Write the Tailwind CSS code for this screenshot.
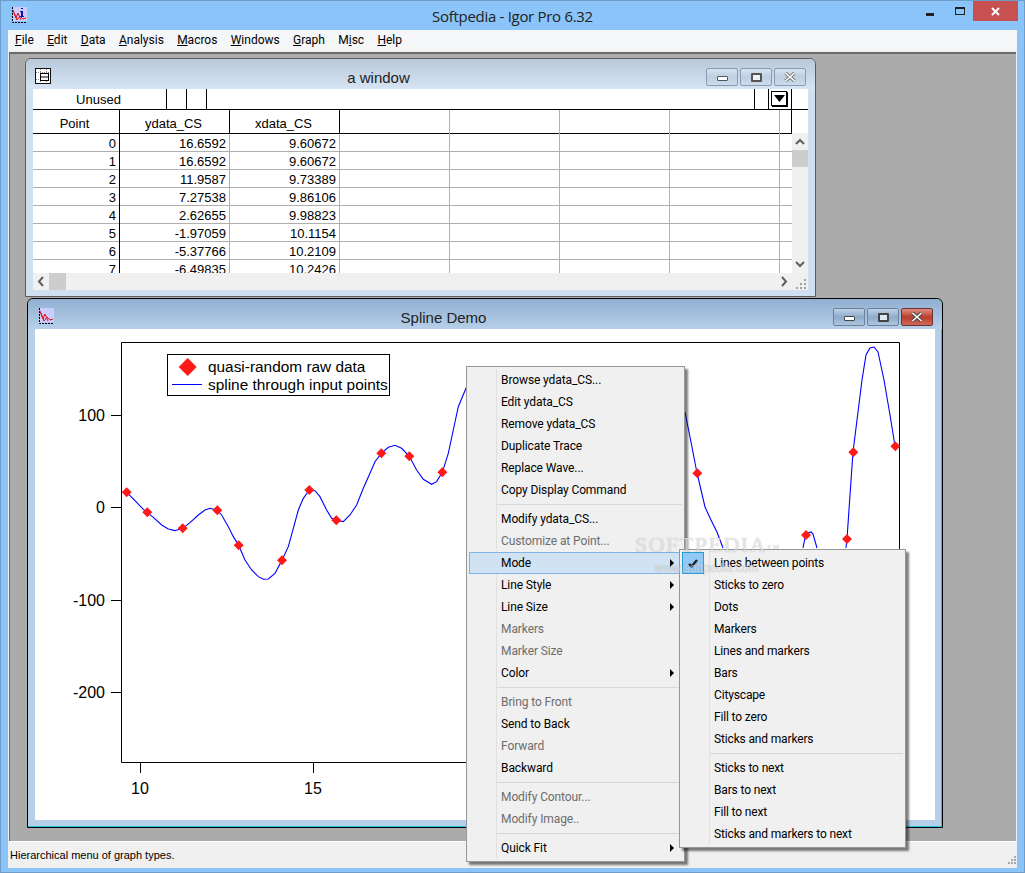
<!DOCTYPE html>
<html lang="en">
<head>
	<meta charset="UTF-8">
	<title>Softpedia - Igor Pro 6.32</title>
	<script src="https://cdn.jsdelivr.net/npm/@tailwindcss/browser@4"></script>
</head>
<body class="bg-[#8ac4f8] overflow-hidden">
<div class="relative w-[1025px] h-[873px] overflow-hidden border border-[#6d9cc9] font-['Roboto',sans-serif] text-[12px] text-black flex flex-col">
	<!-- App title bar -->
	<div class="h-[29px] flex items-start shrink-0">
		<svg class="mt-[6px] ml-[10px] w-[16px] h-[16px]" viewBox="0 0 16 16">
			<rect x="2" y="0" width="14" height="14" fill="#ccccff"/>
			<path d="M1.500 0V15.500H16" fill="none" stroke="#000" stroke-dasharray="2 1"/>
			<path d="M2 3L5 11L7 6L10 13M3 6L6 13L9 9L12 12L15 11" fill="none" stroke="#e01010"/>
			<path d="M10 1h2v1h-2zM9 4h3v5h1v1h-4v-1h1v-4h-1z" fill="#1010b0"/>
		</svg>
		<div class="flex-1 text-center text-[15px] leading-[30px] pl-[76px] font-['Open_Sans',sans-serif] tracking-[-0.3px] text-[#222]">Softpedia - Igor Pro 6.32</div>
		<div class="w-[16px] h-[3px] bg-[#222] mt-[12px] mr-[-4px] scale-x-[.5]"></div>
		<div class="w-[10px] h-[8px] border border-[#222] border-t-2 mt-[6px] ml-[21px]"></div>
		<div class="w-[45px] h-[20px] bg-[#c75050] ml-[8px] mr-[6px] flex items-center justify-center">
			<svg class="w-[9px] h-[9px]" viewBox="0 0 9 9"><path d="M1 1L8 8M8 1L1 8" stroke="#fff" stroke-width="2"/></svg>
		</div>
	</div>

	<!-- Client area -->
	<div class="ml-[7px] mr-[7px] flex-1 flex flex-col bg-[#f0f0f0]">
		<!-- Menu bar -->
		<div class="h-[20px] bg-[#f5f6f7] flex items-center pl-[7px] gap-[13.300px] shrink-0">
			<span><u>F</u>ile</span><span><u>E</u>dit</span><span><u>D</u>ata</span><span><u>A</u>nalysis</span><span><u>M</u>acros</span><span><u>W</u>indows</span><span><u>G</u>raph</span><span>M<u>i</u>sc</span><span><u>H</u>elp</span>
		</div>

		<!-- MDI area -->
		<div class="relative h-[789px] mt-[2px] mx-px bg-[#ababab] border-t-2 border-l border-[#6a6a6a] shrink-0">

			<!-- Table window -->
			<div class="absolute left-[15px] top-[4px] w-[791px] h-[239px] border border-[#5c5c5c] rounded-t-[6px] bg-[#cfe0f1] flex flex-col font-['Liberation_Sans',sans-serif]">
				<div class="h-[30px] rounded-t-[6px] bg-gradient-to-b from-[#b9c9da] to-[#d6e4f3] flex items-start shrink-0">
					<svg class="mt-[9px] ml-[9px] w-[16px] h-[16px]" viewBox="0 0 16 16">
						<rect x=".5" y=".5" width="15" height="15" fill="#fff" stroke="#111"/>
						<path d="M1 4.500H15M1 11.500H15M5.500 1V15M11.500 1V15" stroke="#888" stroke-dasharray="1 1" fill="none"/>
						<rect x="5.500" y="5.500" width="8" height="7" fill="#fff" stroke="#000"/>
						<path d="M5.500 9H13.500" stroke="#000"/>
					</svg>
					<div class="flex-1 text-center text-[15px] leading-[38px] text-[#222]">a window</div>
					<div class="flex gap-[2px] mt-[9px] mr-[9px]">
						<div class="w-[32px] h-[18px] border border-[#8b99b2] rounded-[2px] bg-gradient-to-b from-[#d5e2ef] via-[#bfcfe2] to-[#cddcec] flex items-center justify-center"><div class="w-[11px] h-[5px] mt-[3px] border border-[#555] bg-white rounded-[1px]"></div></div>
						<div class="w-[32px] h-[18px] border border-[#8b99b2] rounded-[2px] bg-gradient-to-b from-[#d5e2ef] via-[#bfcfe2] to-[#cddcec] flex items-center justify-center"><div class="w-[11px] h-[9px] border-2 border-[#555] bg-white/70 rounded-[1px]"></div></div>
						<div class="w-[32px] h-[18px] border border-[#8b99b2] rounded-[2px] bg-gradient-to-b from-[#d5e2ef] via-[#bfcfe2] to-[#cddcec] flex items-center justify-center"><svg class="w-[12px] h-[10px]" viewBox="0 0 12 10"><path d="M1.500 1L10.500 9M10.500 1L1.500 9" stroke="#777" stroke-width="3.400"/><path d="M1.500 1L10.500 9M10.500 1L1.500 9" stroke="#fff" stroke-width="1.600"/></svg></div>
					</div>
				</div>
				<div class="relative mx-[7px] h-[201px] bg-white overflow-hidden">
					<!-- Entry row -->
					<div class="h-[21px] border-b border-black relative">
						<div class="absolute left-0 top-0 w-[134px] h-[20px] border-r border-black text-center text-[13px] leading-[22px] pr-[2px]">Unused</div>
						<div class="absolute left-[153px] top-0 w-px h-[20px] bg-black"></div>
						<div class="absolute left-[173px] top-0 w-px h-[20px] bg-black"></div>
						<div class="absolute left-[721px] top-0 w-px h-[20px] bg-black"></div>
						<div class="absolute left-[735px] top-0 w-px h-[20px] bg-black"></div>
						<div class="absolute left-[758px] top-0 w-px h-[44px] bg-black z-10"></div>
						<div class="absolute left-[738px] top-[2px] w-[16px] h-[15px] border border-black bg-white shadow-[1px_1px_0_#000] flex items-center justify-center">
							<svg class="w-[11px] h-[7px]" viewBox="0 0 11 7"><path d="M0 0H11L5.500 7Z" fill="#000"/></svg>
						</div>
					</div>
					<!-- Column titles -->
					<div class="h-[24px] w-[759px] border-b border-black grid grid-cols-[87px_110px_110px_110px_110px_110px_110px] text-[13px] leading-[28px] text-center">
						<div class="border-r border-black pr-[3px]">Point</div>
						<div class="border-r border-black pr-[2px]">ydata_CS</div>
						<div class="border-r border-black pr-[2px]">xdata_CS</div>
						<div class="border-r border-[#b0b0b0]"></div>
						<div class="border-r border-[#b0b0b0]"></div>
						<div class="border-r border-[#b0b0b0]"></div>
						<div class="border-r border-[#b0b0b0]"></div>
					</div>
					<!-- Rows -->
					<div class="h-[139px] overflow-hidden w-[759px] text-[13px] leading-[19px] text-right">
						<div class="h-[18px] grid grid-cols-[87px_110px_110px_110px_110px_110px_110px] border-b border-[#b0b0b0]"><div class="border-r border-black pr-[3px]">0</div><div class="border-r border-[#b0b0b0] pr-[3px]">16.6592</div><div class="border-r border-[#b0b0b0] pr-[3px]">9.60672</div><div class="border-r border-[#b0b0b0]"></div><div class="border-r border-[#b0b0b0]"></div><div class="border-r border-[#b0b0b0]"></div><div class="border-r border-[#b0b0b0]"></div></div>
						<div class="h-[18px] grid grid-cols-[87px_110px_110px_110px_110px_110px_110px] border-b border-[#b0b0b0]"><div class="border-r border-black pr-[3px]">1</div><div class="border-r border-[#b0b0b0] pr-[3px]">16.6592</div><div class="border-r border-[#b0b0b0] pr-[3px]">9.60672</div><div class="border-r border-[#b0b0b0]"></div><div class="border-r border-[#b0b0b0]"></div><div class="border-r border-[#b0b0b0]"></div><div class="border-r border-[#b0b0b0]"></div></div>
						<div class="h-[18px] grid grid-cols-[87px_110px_110px_110px_110px_110px_110px] border-b border-[#b0b0b0]"><div class="border-r border-black pr-[3px]">2</div><div class="border-r border-[#b0b0b0] pr-[3px]">11.9587</div><div class="border-r border-[#b0b0b0] pr-[3px]">9.73389</div><div class="border-r border-[#b0b0b0]"></div><div class="border-r border-[#b0b0b0]"></div><div class="border-r border-[#b0b0b0]"></div><div class="border-r border-[#b0b0b0]"></div></div>
						<div class="h-[18px] grid grid-cols-[87px_110px_110px_110px_110px_110px_110px] border-b border-[#b0b0b0]"><div class="border-r border-black pr-[3px]">3</div><div class="border-r border-[#b0b0b0] pr-[3px]">7.27538</div><div class="border-r border-[#b0b0b0] pr-[3px]">9.86106</div><div class="border-r border-[#b0b0b0]"></div><div class="border-r border-[#b0b0b0]"></div><div class="border-r border-[#b0b0b0]"></div><div class="border-r border-[#b0b0b0]"></div></div>
						<div class="h-[18px] grid grid-cols-[87px_110px_110px_110px_110px_110px_110px] border-b border-[#b0b0b0]"><div class="border-r border-black pr-[3px]">4</div><div class="border-r border-[#b0b0b0] pr-[3px]">2.62655</div><div class="border-r border-[#b0b0b0] pr-[3px]">9.98823</div><div class="border-r border-[#b0b0b0]"></div><div class="border-r border-[#b0b0b0]"></div><div class="border-r border-[#b0b0b0]"></div><div class="border-r border-[#b0b0b0]"></div></div>
						<div class="h-[18px] grid grid-cols-[87px_110px_110px_110px_110px_110px_110px] border-b border-[#b0b0b0]"><div class="border-r border-black pr-[3px]">5</div><div class="border-r border-[#b0b0b0] pr-[3px]">-1.97059</div><div class="border-r border-[#b0b0b0] pr-[3px]">10.1154</div><div class="border-r border-[#b0b0b0]"></div><div class="border-r border-[#b0b0b0]"></div><div class="border-r border-[#b0b0b0]"></div><div class="border-r border-[#b0b0b0]"></div></div>
						<div class="h-[18px] grid grid-cols-[87px_110px_110px_110px_110px_110px_110px] border-b border-[#b0b0b0]"><div class="border-r border-black pr-[3px]">6</div><div class="border-r border-[#b0b0b0] pr-[3px]">-5.37766</div><div class="border-r border-[#b0b0b0] pr-[3px]">10.2109</div><div class="border-r border-[#b0b0b0]"></div><div class="border-r border-[#b0b0b0]"></div><div class="border-r border-[#b0b0b0]"></div><div class="border-r border-[#b0b0b0]"></div></div>
						<div class="h-[18px] grid grid-cols-[87px_110px_110px_110px_110px_110px_110px] border-b border-[#b0b0b0]"><div class="border-r border-black pr-[3px]">7</div><div class="border-r border-[#b0b0b0] pr-[3px]">-6.49835</div><div class="border-r border-[#b0b0b0] pr-[3px]">10.2426</div><div class="border-r border-[#b0b0b0]"></div><div class="border-r border-[#b0b0b0]"></div><div class="border-r border-[#b0b0b0]"></div><div class="border-r border-[#b0b0b0]"></div></div>
					</div>
					<!-- Scrollbars -->
					<div class="absolute left-[759px] top-[44px] w-[16px] h-[140px] bg-[#f0f0f0]">
						<svg class="w-[16px] h-[17px]" viewBox="0 0 16 17"><path d="M4 11L8 7L12 11" fill="none" stroke="#606060" stroke-width="2"/></svg>
						<div class="w-[16px] h-[17px] bg-[#cdcdcd]"></div>
						<svg class="absolute bottom-0 w-[16px] h-[17px]" viewBox="0 0 16 17"><path d="M4 6L8 10L12 6" fill="none" stroke="#606060" stroke-width="2"/></svg>
					</div>
					<div class="absolute left-0 top-[184px] w-[775px] h-[17px] bg-[#f0f0f0] flex items-center">
						<svg class="w-[16px] h-[17px]" viewBox="0 0 16 17"><path d="M10 4L6 8.500L10 13" fill="none" stroke="#606060" stroke-width="2"/></svg>
						<div class="w-[17px] h-[17px] bg-[#cdcdcd]"></div>
						<svg class="absolute left-[743px] w-[16px] h-[17px]" viewBox="0 0 16 17"><path d="M6 4L10 8.500L6 13" fill="none" stroke="#606060" stroke-width="2"/></svg>
						<svg class="absolute left-[763px] top-[5px] w-[11px] h-[11px]" viewBox="0 0 11 11"><path d="M8 1h2v2H8zM4 5h2v2H4zM8 5h2v2H8zM0 9h2v2H0zM4 9h2v2H4zM8 9h2v2H8z" fill="#a0a0a0"/></svg>
					</div>
				</div>
			</div>

			<!-- Graph window -->
			<div class="absolute left-[17px] top-[244px] w-[916px] h-[530px] rounded-t-[6px] border border-black bg-[#b7d0e9] flex flex-col font-['Liberation_Sans',sans-serif] shadow-[inset_-1px_-1px_0_#1fc5de]">
				<div class="h-[30px] rounded-t-[6px] bg-gradient-to-b from-[#90afd0] to-[#b7d0e9] flex items-start shrink-0">
					<svg class="mt-[9px] ml-[10px] w-[16px] h-[16px]" viewBox="0 0 16 16">
						<rect x="2" y="0" width="14" height="14" fill="#ccccff"/>
						<path d="M1.500 0V15.500H16" fill="none" stroke="#000" stroke-dasharray="2 1"/>
						<path d="M2 3L5 11L7 6L10 13M3 5L6 13L9 9L12 12L15 11" fill="none" stroke="#e01010"/>
					</svg>
					<div class="flex-1 text-center text-[15px] leading-[38px] text-[#222]">Spline Demo</div>
					<div class="flex gap-[2px] mt-[9px] mr-[9px]">
						<div class="w-[32px] h-[18px] border border-[#6e7f9c] rounded-[2px] bg-gradient-to-b from-[#bfd2e6] via-[#8fabcb] to-[#adc5de] flex items-center justify-center"><div class="w-[11px] h-[5px] mt-[3px] border border-[#444] bg-white rounded-[1px]"></div></div>
						<div class="w-[32px] h-[18px] border border-[#6e7f9c] rounded-[2px] bg-gradient-to-b from-[#bfd2e6] via-[#8fabcb] to-[#adc5de] flex items-center justify-center"><div class="w-[11px] h-[9px] border-2 border-[#444] bg-white/70 rounded-[1px]"></div></div>
						<div class="w-[32px] h-[18px] border border-[#6e3030] rounded-[2px] bg-gradient-to-b from-[#dd9084] via-[#b83c2c] to-[#cf6a5a] flex items-center justify-center"><svg class="w-[12px] h-[10px]" viewBox="0 0 12 10"><path d="M1.500 1L10.500 9M10.500 1L1.500 9" stroke="#444" stroke-width="3.400"/><path d="M1.500 1L10.500 9M10.500 1L1.500 9" stroke="#fff" stroke-width="1.600"/></svg></div>
					</div>
				</div>
				<div class="relative ml-[7px] w-[900px] h-[491px] bg-white">
					<svg class="absolute inset-0 w-[900px] h-[491px]" viewBox="35 329 900 491" font-family="Liberation Sans, sans-serif" font-size="16">
						<path d="M121.500 342.500H899.500V762.500H121.500ZM111 415.500H121M111 507.500H121M111 600.500H121M111 692.500H121M140.500 763V773M313.500 763V773M486.500 763V773M659.500 763V773M832.500 763V773" fill="none" stroke="#000"/>
						<g fill="#000">
							<text x="105" y="421" text-anchor="end">100</text>
							<text x="105" y="513" text-anchor="end">0</text>
							<text x="105" y="606" text-anchor="end">-100</text>
							<text x="105" y="698" text-anchor="end">-200</text>
							<text x="140" y="794" text-anchor="middle">10</text>
							<text x="313" y="794" text-anchor="middle">15</text>
						</g>
						<!-- spline -->
						<g transform="translate(100 400) scale(.3333)" fill="none" stroke="#0000ff" stroke-width="3.300">
							<polyline points="80,277 105,302 130,328 160,352 185,375 205,387 225,392 248,385 270,368 295,345 315,330 330,325 352,331 365,345 385,380 400,410 416,436 435,480 455,510 475,530 490,538 505,537 525,520 546,481 565,440 580,385 595,330 610,295 628,270 645,272 660,290 680,330 695,355 709,361 730,365 750,345 770,315 790,265 810,220 825,185 844,160 865,142 885,136 905,145 928,169 950,210 970,238 995,253 1010,245 1027,217 1045,160 1060,90 1075,20 1100,-40 1110,-60"/>
						</g>
						<path d="M685 412L690 437L697 473L705 507L711 520L717 532L723 548M803 548L805 538L808 533L811 532L813 534L817 548M846 548L847 539L850 495L853 452L857 420L862 380L866 355L870 348L874 347L878 352L884 380L890 415L895 446" fill="none" stroke="#0000ff" stroke-width="1.100"/>
						<!-- markers -->
						<g fill="#ff1a1a">
							<path d="M126.700 487.300l5 5l-5 5l-5 -5zM147.300 507.300l5 5l-5 5l-5 -5zM182.700 523.300l5 5l-5 5l-5 -5zM217.300 505.300l5 5l-5 5l-5 -5zM238.700 540.300l5 5l-5 5l-5 -5zM282 555.300l5 5l-5 5l-5 -5zM309.300 485l5 5l-5 5l-5 -5zM336.300 515.300l5 5l-5 5l-5 -5zM381.300 448.300l5 5l-5 5l-5 -5zM409.300 451.300l5 5l-5 5l-5 -5zM442.300 467.300l5 5l-5 5l-5 -5zM697.300 468.300l5 5l-5 5l-5 -5zM806 530l5 5l-5 5l-5 -5zM847 534l5 5l-5 5l-5 -5zM853.300 447.300l5 5l-5 5l-5 -5zM895.300 441.300l5 5l-5 5l-5 -5z"/>
						</g>
						<!-- legend -->
						<rect x="167.500" y="354.500" width="222" height="41" fill="#fff" stroke="#000"/>
						<path d="M187.700 358l9 9l-9 9l-9 -9z" fill="#ff1a1a"/>
						<path d="M172 384.500H202" stroke="#0000ff"/>
						<text x="208" y="372" fill="#000" font-size="15.400">quasi-random raw data</text>
						<text x="208" y="390" fill="#000" font-size="15.400">spline through input points</text>
					</svg>
				</div>
			</div>
		</div>

		<!-- Status bar -->
		<div class="flex-1 bg-[#f0f0f0] border-t border-white font-['Liberation_Sans',sans-serif] text-[11px] leading-[26px] pl-[2px]">Hierarchical menu of graph types.</div>
	</div>
	<div class="h-[7px] shrink-0"></div>

	<!-- Context menu -->
	<div class="absolute left-[465px] top-[365px] w-[219px] h-[496px] border border-[#979797] bg-[#f0f0f0] shadow-[3px_3px_2px_rgba(0,0,0,.5)] pt-[2px] pb-[2px] z-20 tracking-[-0.1px]">
		<div class="absolute left-[29px] top-[2px] bottom-[3px] w-px bg-[#e0e0e0]"></div>
		<div class="h-[22px] leading-[22px] pl-[34px]">Browse ydata_CS...</div>
		<div class="h-[22px] leading-[22px] pl-[34px]">Edit ydata_CS</div>
		<div class="h-[22px] leading-[22px] pl-[34px]">Remove ydata_CS</div>
		<div class="h-[22px] leading-[22px] pl-[34px]">Duplicate Trace</div>
		<div class="h-[22px] leading-[22px] pl-[34px]">Replace Wave...</div>
		<div class="h-[22px] leading-[22px] pl-[34px]">Copy Display Command</div>
		<div class="h-[7px] pt-[3px] pl-[30px] pr-[2px]"><div class="h-px bg-[#d7d7d7]"></div></div>
		<div class="h-[22px] leading-[22px] pl-[34px]">Modify ydata_CS...</div>
		<div class="h-[22px] leading-[22px] pl-[34px] text-[#6d6d6d]">Customize at Point...</div>
		<div class="relative h-[22px] leading-[20px] mx-[2px] pl-[31px] bg-[#d1e2f2] border border-[#7eb4ea]">Mode<span class="absolute right-[7px] top-[6px] border-y-[4px] border-l-[4px] border-y-transparent border-l-black"></span></div>
		<div class="relative h-[22px] leading-[22px] pl-[34px]">Line Style<span class="absolute right-[10px] top-[7px] border-y-[4px] border-l-[4px] border-y-transparent border-l-black"></span></div>
		<div class="relative h-[22px] leading-[22px] pl-[34px]">Line Size<span class="absolute right-[10px] top-[7px] border-y-[4px] border-l-[4px] border-y-transparent border-l-black"></span></div>
		<div class="h-[22px] leading-[22px] pl-[34px] text-[#6d6d6d]">Markers</div>
		<div class="h-[22px] leading-[22px] pl-[34px] text-[#6d6d6d]">Marker Size</div>
		<div class="relative h-[22px] leading-[22px] pl-[34px]">Color<span class="absolute right-[10px] top-[7px] border-y-[4px] border-l-[4px] border-y-transparent border-l-black"></span></div>
		<div class="h-[7px] pt-[3px] pl-[30px] pr-[2px]"><div class="h-px bg-[#d7d7d7]"></div></div>
		<div class="h-[22px] leading-[22px] pl-[34px] text-[#6d6d6d]">Bring to Front</div>
		<div class="h-[22px] leading-[22px] pl-[34px]">Send to Back</div>
		<div class="h-[22px] leading-[22px] pl-[34px] text-[#6d6d6d]">Forward</div>
		<div class="h-[22px] leading-[22px] pl-[34px]">Backward</div>
		<div class="h-[7px] pt-[3px] pl-[30px] pr-[2px]"><div class="h-px bg-[#d7d7d7]"></div></div>
		<div class="h-[22px] leading-[22px] pl-[34px] text-[#6d6d6d]">Modify Contour...</div>
		<div class="h-[22px] leading-[22px] pl-[34px] text-[#6d6d6d]">Modify Image..</div>
		<div class="h-[7px] pt-[3px] pl-[30px] pr-[2px]"><div class="h-px bg-[#d7d7d7]"></div></div>
		<div class="relative h-[22px] leading-[22px] pl-[34px]">Quick Fit<span class="absolute right-[10px] top-[7px] border-y-[4px] border-l-[4px] border-y-transparent border-l-black"></span></div>
	</div>

	<!-- Mode submenu -->
	<div class="absolute left-[678px] top-[548px] w-[227px] h-[299px] border border-[#979797] bg-[#f0f0f0] shadow-[3px_3px_2px_rgba(0,0,0,.5)] pt-[2px] z-30 tracking-[-0.15px]">
		<div class="absolute left-[29px] top-[2px] bottom-[3px] w-px bg-[#e0e0e0]"></div>
		<div class="absolute left-[2px] top-[2px] w-[22px] h-[22px] bg-[#90c8f6] border border-[#2f9ccf] flex items-center justify-center">
			<svg class="w-[10px] h-[9px]" viewBox="0 0 10 9"><path d="M1 5L3.500 7.500L9 1" fill="none" stroke="#222" stroke-width="2.400"/></svg>
		</div>
		<div class="h-[22px] leading-[22px] pl-[34px]">Lines between points</div>
		<div class="h-[22px] leading-[22px] pl-[34px]">Sticks to zero</div>
		<div class="h-[22px] leading-[22px] pl-[34px]">Dots</div>
		<div class="h-[22px] leading-[22px] pl-[34px]">Markers</div>
		<div class="h-[22px] leading-[22px] pl-[34px]">Lines and markers</div>
		<div class="h-[22px] leading-[22px] pl-[34px]">Bars</div>
		<div class="h-[22px] leading-[22px] pl-[34px]">Cityscape</div>
		<div class="h-[22px] leading-[22px] pl-[34px]">Fill to zero</div>
		<div class="h-[22px] leading-[22px] pl-[34px]">Sticks and markers</div>
		<div class="h-[7px] pt-[3px] pl-[30px] pr-[2px]"><div class="h-px bg-[#d7d7d7]"></div></div>
		<div class="h-[22px] leading-[22px] pl-[34px]">Sticks to next</div>
		<div class="h-[22px] leading-[22px] pl-[34px]">Bars to next</div>
		<div class="h-[22px] leading-[22px] pl-[34px]">Fill to next</div>
		<div class="h-[22px] leading-[22px] pl-[34px]">Sticks and markers to next</div>
	</div>

	<!-- Status grip -->
	<svg class="absolute left-[1007px] top-[855px] w-[9px] h-[9px]" viewBox="0 0 9 9"><path d="M6 0h2v2H6zM3 3h2v2H3zM6 3h2v2H6zM0 6h2v2H0zM3 6h2v2H3zM6 6h2v2H6z" fill="#a8a8a8"/></svg>

	<!-- Watermark -->
	<div class="absolute left-[634px] top-[527px] z-40 font-['Liberation_Serif',serif] text-[22px] tracking-[1.500px] text-white/70 [text-shadow:0_0_1px_rgba(0,0,0,.35)] pointer-events-none">SOFTPEDIA<sup class="text-[7px]">TM</sup></div>
	<div class="absolute left-[654px] top-[558px] z-40 font-['Liberation_Sans',sans-serif] text-[12px] text-white/60 [text-shadow:0_0_1px_rgba(0,0,0,.3)] pointer-events-none">www.softpedia.com</div>
</div>
</body>
</html>
